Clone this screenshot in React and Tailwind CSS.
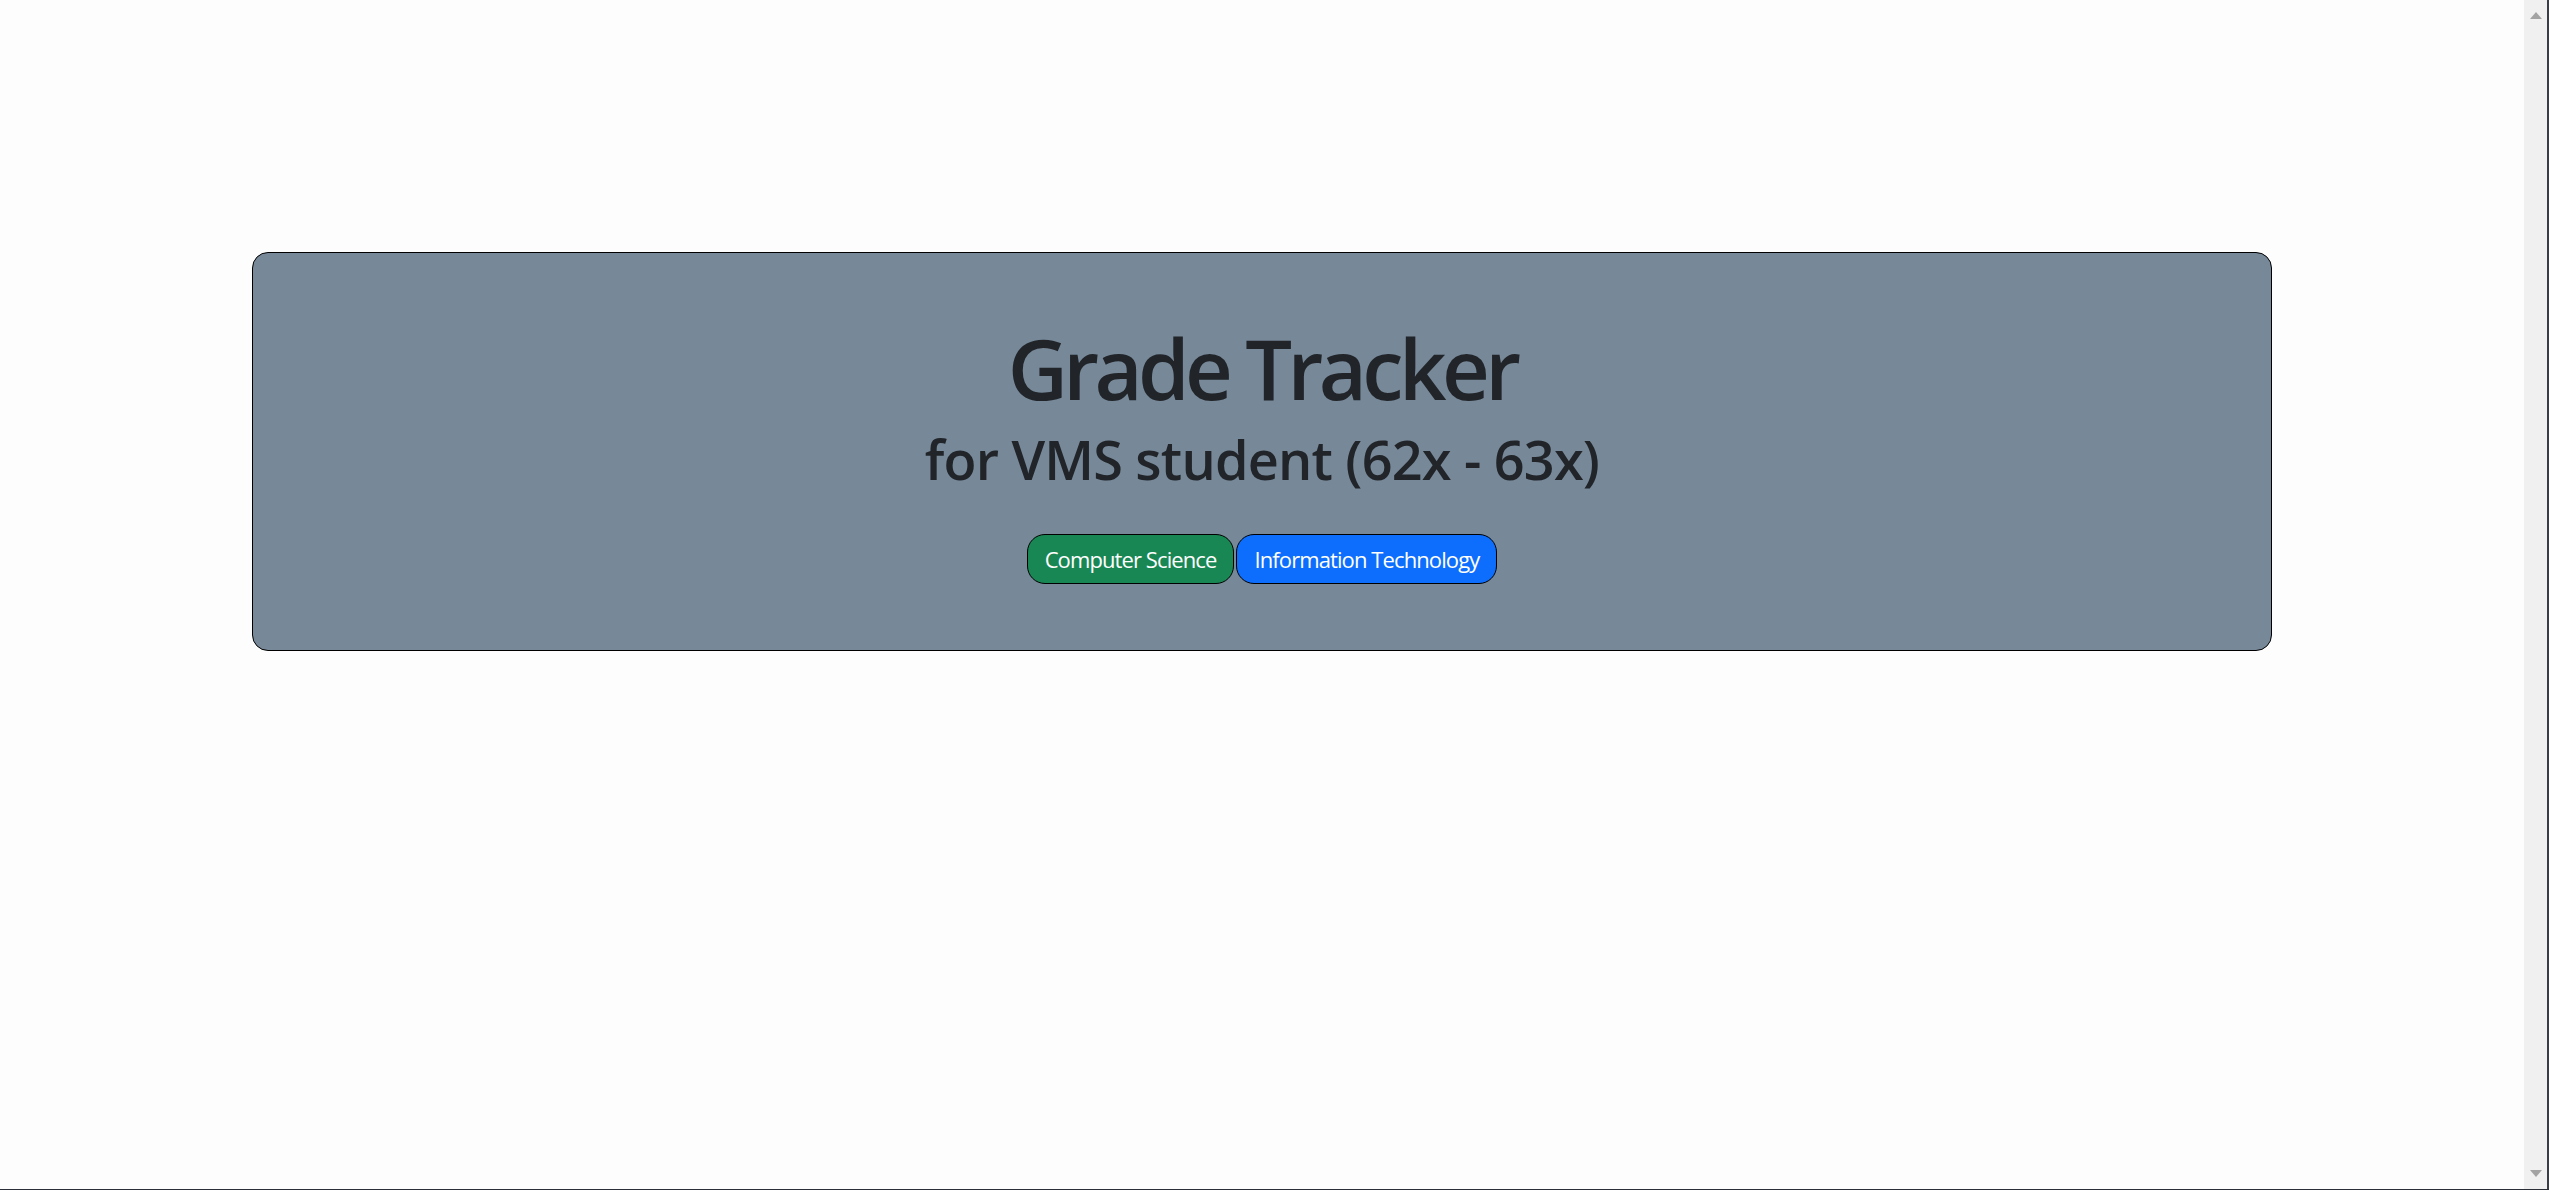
export default function App() {
  return (
    <div className="flex h-[1190px] w-full overflow-hidden border-b border-[#2b2f36] bg-[#fdfdfd]">
      {/* Page */}
      <main className="flex-1 min-w-0">
        <section
          className="mx-auto mt-[10%] w-[80%] rounded-2xl border border-black bg-[#778899] px-8 pt-[65px] pb-[66px] text-center text-[#212529]"
          style={{ fontFamily: '"Open Sans", "Noto Sans", sans-serif' }}
        >
          <h1 className="text-[83px] font-semibold leading-[1.2] tracking-[-4.6px]">
            Grade Tracker
          </h1>
          <h2 className="mt-[9px] text-[54px] font-semibold leading-[1.2] tracking-[-0.8px]">
            for VMS student (62x - 63x)
          </h2>
          <div className="mt-[42px] flex items-center justify-center gap-[2px]">
            <button className="h-[50px] rounded-[18px] border border-black bg-[#198754] px-[17px] text-[22px] leading-none text-white tracking-[-0.9px]">
              Computer Science
            </button>
            <button className="h-[50px] rounded-[18px] border border-black bg-[#0d6efd] px-[17px] text-[22px] leading-none text-white tracking-[-0.9px]">
              Information Technology
            </button>
          </div>
        </section>
      </main>

      {/* Scrollbar */}
      <div className="flex w-[25px] shrink-0 flex-col items-center justify-between border-r-2 border-[#3a3d42] bg-[#f0f0f0] py-[12px]">
        <svg width="12" height="7" viewBox="0 0 12 7">
          <path d="M6 0 L12 7 L0 7 Z" fill="#a3a3a3" />
        </svg>
        <svg width="12" height="7" viewBox="0 0 12 7">
          <path d="M0 0 L12 0 L6 7 Z" fill="#a3a3a3" />
        </svg>
      </div>
    </div>
  );
}
